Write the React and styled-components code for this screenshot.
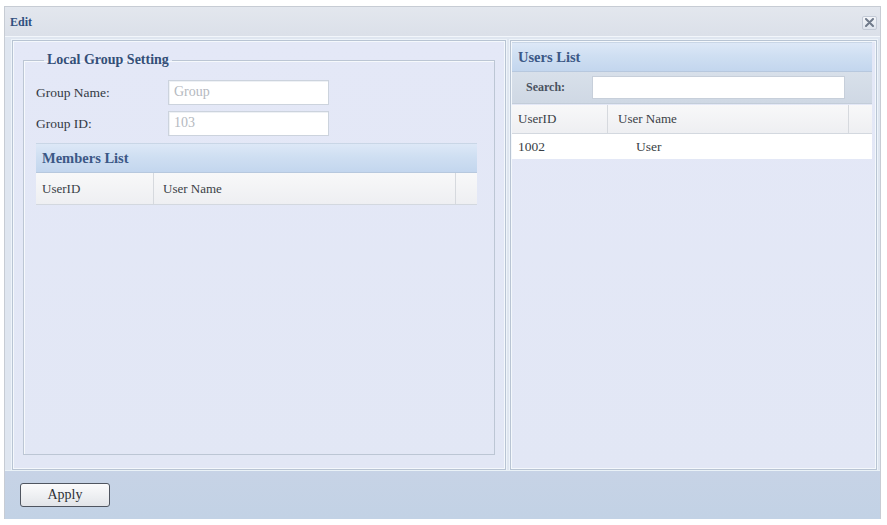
import React from "react";
import styled, { createGlobalStyle } from "styled-components";

const Global = createGlobalStyle`
  html, body { margin: 0; padding: 0; background: #ffffff; }
  body { font-family: "Liberation Serif", "Times New Roman", serif; }
`;

const Page = styled.div`
  padding: 6px 6px 6px 4px;
  width: 887px;
  height: 525px;
  box-sizing: border-box;
`;

const Window = styled.div`
  height: 100%;
  display: flex;
  flex-direction: column;
  border: 1px solid #c7ccd4;
  border-bottom: none;
  background: #dfe4ec;
  box-sizing: border-box;
`;

const TitleBar = styled.div`
  height: 29px;
  display: flex;
  align-items: center;
  justify-content: space-between;
  padding: 2px 3px 0 5px;
  box-sizing: border-box;
  background: linear-gradient(#e3e7ee, #dbe0e9);
`;

const Title = styled.span`
  font-size: 12px;
  font-weight: bold;
  color: #30507f;
`;

const CloseButton = styled.button`
  width: 15px;
  height: 14px;
  padding: 0;
  border: 1px solid #c3cad6;
  border-radius: 2px;
  background: linear-gradient(#f4f6fa, #dde3ec);
  display: flex;
  align-items: center;
  justify-content: center;
`;

const Body = styled.div`
  flex: 1;
  display: flex;
  gap: 4px;
  padding: 3px 3px 0 7px;
  background: #dfe6f0;
  border-top: 1px solid #f2f6fb;
`;

const Panel = styled.div`
  width: ${(p) => p.$w}px;
  display: flex;
  flex-direction: column;
  box-sizing: border-box;
  border: 1px solid #b8c4d3;
  box-shadow: inset 0 0 0 1px #f4f8fc, 0 0 0 1px #eef4fa;
  background: linear-gradient(#e4e8f7, #e2e7f5);
  padding: ${(p) => p.$pad || "0"};
`;

const Fieldset = styled.fieldset`
  margin: 0;
  flex: 1;
  border: 1px solid #bcc6d4;
  padding: 2px 12px 0 12px;
  box-shadow: inset 1px 1px 0 #f6f9fc;
`;

const Legend = styled.legend`
  font-size: 14px;
  font-weight: bold;
  color: #344f78;
  padding: 0 3px;
  margin-left: 8px;
`;

const FormRow = styled.div`
  display: grid;
  grid-template-columns: 132px 161px;
  align-items: center;
  margin-top: ${(p) => p.$mt || 0}px;
`;

const Label = styled.span`
  font-size: 13.5px;
  color: #333a44;
`;

const TextBox = styled.div`
  height: 25px;
  box-sizing: border-box;
  border: 1px solid #ccd3dd;
  background: #ffffff;
  box-shadow: inset 1px 1px 0 #eef1f5;
  font-size: 14px;
  color: #b5b9bf;
  padding: 3px 0 0 5px;
`;

const ListHeader = styled.div`
  height: ${(p) => p.$h}px;
  display: flex;
  align-items: center;
  padding-left: 6px;
  box-sizing: border-box;
  font-size: 14.5px;
  font-weight: bold;
  color: #3b5886;
  background: linear-gradient(#dde8f7 0%, #cfdff2 45%, #c3d6ee 100%);
  border-top: 1px solid #c9d6e6;
  border-bottom: 1px solid #b7c8de;
  margin-right: ${(p) => p.$mr || 0}px;
  margin-top: ${(p) => p.$mt || 0}px;
`;

const Table = styled.div`
  margin-right: ${(p) => p.$mr || 0}px;
  margin-top: ${(p) => p.$mt || 0}px;
`;

const HeadRow = styled.div`
  display: grid;
  grid-template-columns: ${(p) => p.$cols};
  height: ${(p) => p.$h}px;
  background: linear-gradient(#f8f8f9, #eeeff2);
  border-bottom: 1px solid #d3d8df;
`;

const HeadCell = styled.div`
  display: flex;
  align-items: center;
  padding-left: ${(p) => p.$pl ?? 6}px;
  font-size: 13px;
  color: #3a3f46;
  border-right: ${(p) => (p.$last ? "none" : "1px solid #d6d9de")};
`;

const DataRow = styled.div`
  display: grid;
  grid-template-columns: ${(p) => p.$cols};
  height: 25px;
  background: #ffffff;
  align-items: center;
`;

const DataCell = styled.div`
  font-size: 13.5px;
  color: #3a3f46;
  padding-left: ${(p) => p.$pl}px;
`;

const SearchBar = styled.div`
  height: 31px;
  display: flex;
  align-items: center;
  background: linear-gradient(#d8e0ea, #cfd8e4);
  border-bottom: 1px solid #c3cdd9;
  margin-right: 4px;
`;

const SearchLabel = styled.span`
  width: 80px;
  padding-left: 14px;
  box-sizing: border-box;
  font-size: 12px;
  font-weight: bold;
  color: #4a5260;
`;

const SearchInput = styled.div`
  width: 253px;
  height: 23px;
  box-sizing: border-box;
  border: 1px solid #c7cfda;
  background: #ffffff;
`;

const Footer = styled.div`
  height: 48px;
  display: flex;
  align-items: center;
  padding-left: 15px;
  background: linear-gradient(#c7d3e6, #c2d2e5);
  border-top: 1px solid #eaf2f7;
`;

const Button = styled.button`
  width: 90px;
  height: 24px;
  font-family: "Liberation Serif", "Times New Roman", serif;
  font-size: 14px;
  color: #2c2f35;
  border: 1px solid #4f5560;
  border-radius: 3px;
  background: linear-gradient(#fbfbfc, #eceef1 60%, #e2e4e8);
  padding: 0;
`;

export default function App() {
  return (
    <>
      <Global />
      <Page>
        <Window>
          <TitleBar>
            <Title>Edit</Title>
            <CloseButton aria-label="close">
              <svg width="9" height="9" viewBox="0 0 9 9">
                <path d="M1 1 L8 8 M8 1 L1 8" stroke="#6f7a8a" strokeWidth="2" strokeLinecap="round" />
              </svg>
            </CloseButton>
          </TitleBar>
          <Body>
            <Panel $w={494} $pad="11px 10px 14px 10px">
              <Fieldset>
                <Legend>Local Group Setting</Legend>
                <FormRow $mt={10}>
                  <Label>Group Name:</Label>
                  <TextBox>Group</TextBox>
                </FormRow>
                <FormRow $mt={6}>
                  <Label>Group ID:</Label>
                  <TextBox>103</TextBox>
                </FormRow>
                <ListHeader $h={30} $mr={5} $mt={7}>
                  Members List
                </ListHeader>
                <Table $mr={5}>
                  <HeadRow $cols="118px 1fr 21px" $h={31}>
                    <HeadCell>UserID</HeadCell>
                    <HeadCell $pl={9}>User Name</HeadCell>
                    <HeadCell $last />
                  </HeadRow>
                </Table>
              </Fieldset>
            </Panel>
            <Panel $w={367} $pad="1px 0 0 1px">
              <ListHeader $h={30} $mr={4}>
                Users List
              </ListHeader>
              <SearchBar>
                <SearchLabel>Search:</SearchLabel>
                <SearchInput />
              </SearchBar>
              <Table $mr={4} $mt={1}>
                <HeadRow $cols="96px 241px 1fr" $h={28}>
                  <HeadCell $pl={6}>UserID</HeadCell>
                  <HeadCell $pl={10}>User Name</HeadCell>
                  <HeadCell $last />
                </HeadRow>
                <DataRow $cols="96px 1fr">
                  <DataCell $pl={6}>1002</DataCell>
                  <DataCell $pl={28}>User</DataCell>
                </DataRow>
              </Table>
            </Panel>
          </Body>
          <Footer>
            <Button>Apply</Button>
          </Footer>
        </Window>
      </Page>
    </>
  );
}
